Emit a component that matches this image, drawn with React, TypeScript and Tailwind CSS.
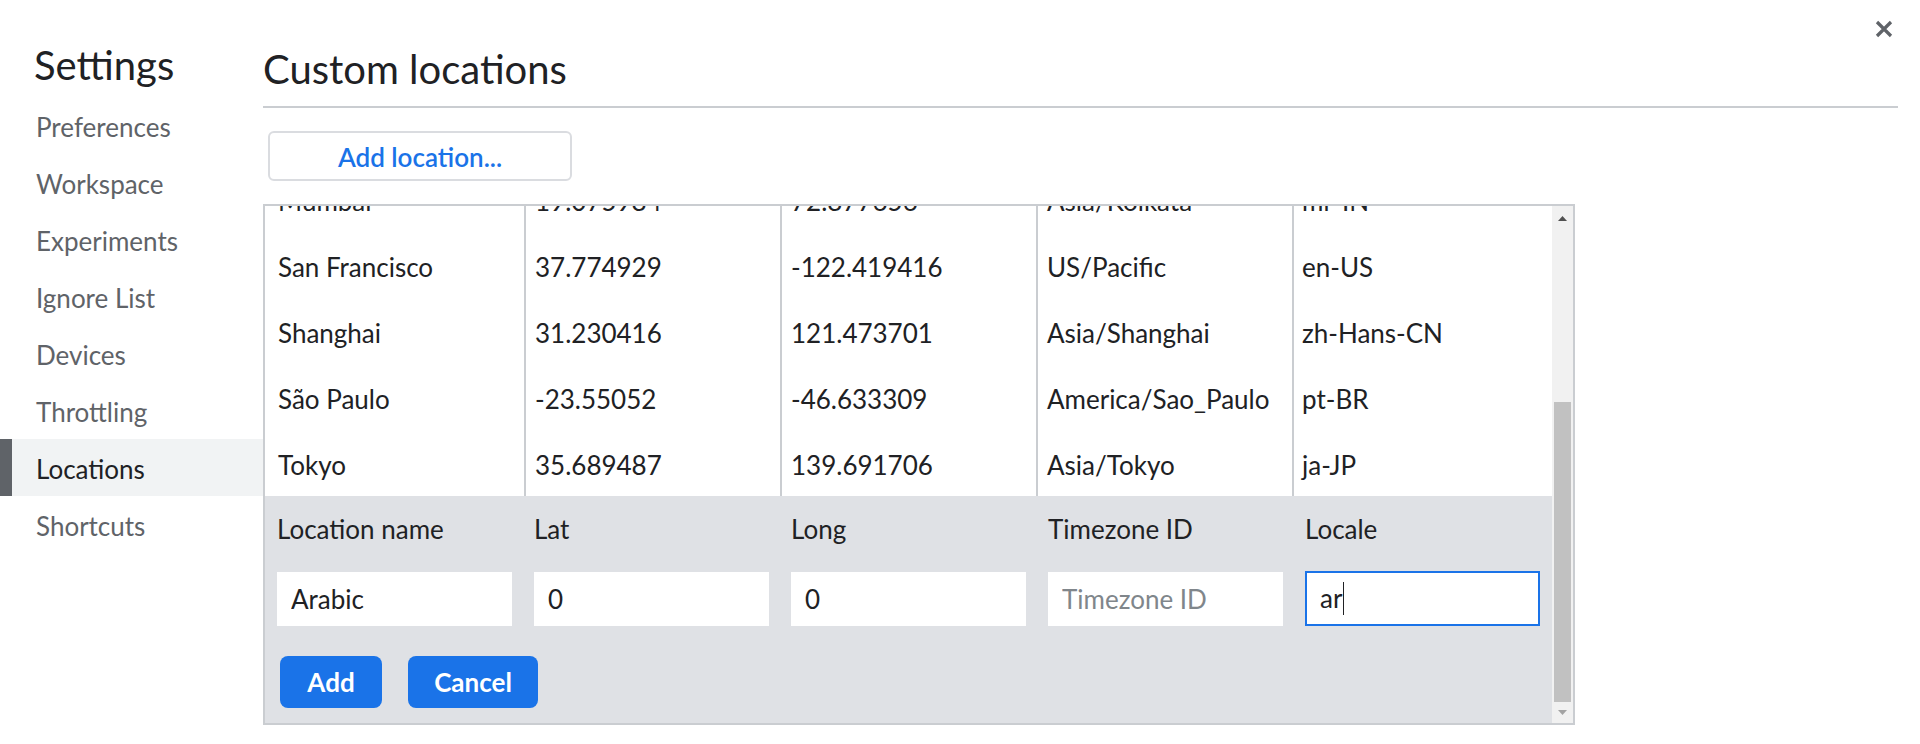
import type { ReactNode } from "react";

const NAV_ITEMS = [
  "Preferences",
  "Workspace",
  "Experiments",
  "Ignore List",
  "Devices",
  "Throttling",
  "Locations",
  "Shortcuts",
];

const LOCATIONS = [
  ["Mumbai", "19.075984", "72.877656", "Asia/Kolkata", "mr-IN"],
  ["San Francisco", "37.774929", "-122.419416", "US/Pacific", "en-US"],
  ["Shanghai", "31.230416", "121.473701", "Asia/Shanghai", "zh-Hans-CN"],
  ["São Paulo", "-23.55052", "-46.633309", "America/Sao_Paulo", "pt-BR"],
  ["Tokyo", "35.689487", "139.691706", "Asia/Tokyo", "ja-JP"],
];

function Cell({ index, children }: { index: number; children: ReactNode }) {
  if (index === 0) {
    return (
      <div className="flex w-[259px] shrink-0 items-center pl-[13px] pt-[5px]">
        {children}
      </div>
    );
  }
  if (index === 4) {
    return (
      <div className="flex flex-1 items-center border-l-2 border-[#cacdd1] pl-[8px] pt-[5px]">
        {children}
      </div>
    );
  }
  return (
    <div className="flex w-[256px] shrink-0 items-center border-l-2 border-[#cacdd1] pl-[9px] pt-[5px]">
      {children}
    </div>
  );
}

function FakeScrollbar() {
  return (
    <div className="flex w-[21px] shrink-0 flex-col bg-[#f1f1f1]">
      <div className="flex h-[20px] items-center justify-center pt-[4px]">
        <svg width="9" height="5" viewBox="0 0 9 5" aria-hidden="true">
          <polygon points="4.5,0 9,5 0,5" fill="#505050" />
        </svg>
      </div>
      <div className="h-[176px]" />
      <div className="mx-[2px] flex-1 bg-[#c1c1c1]" />
      <div className="flex h-[21px] items-center justify-center">
        <svg width="9" height="5" viewBox="0 0 9 5" aria-hidden="true">
          <polygon points="0,0 9,0 4.5,5" fill="#a3a3a3" />
        </svg>
      </div>
    </div>
  );
}

function EditPanel() {
  const labels = ["Location name", "Lat", "Long", "Timezone ID", "Locale"];

  return (
    <div className="flex-1 bg-[#dfe1e5] px-[12px] pt-[16px]">
      <div className="grid grid-cols-5 gap-x-[22px]">
        {labels.map((label) => (
          <div key={label} className="h-[34px] leading-[34px]">
            {label}
          </div>
        ))}
      </div>
      <div className="mt-[26px] grid grid-cols-5 gap-x-[22px]">
        <input
          readOnly
          value="Arabic"
          className="h-[54px] w-full bg-white px-[14px] text-[#202124] outline-none"
        />
        <input
          readOnly
          value="0"
          className="h-[54px] w-full bg-white px-[14px] text-[#202124] outline-none"
        />
        <input
          readOnly
          value="0"
          className="h-[54px] w-full bg-white px-[14px] text-[#202124] outline-none"
        />
        <input
          readOnly
          placeholder="Timezone ID"
          className="h-[54px] w-full bg-white px-[14px] text-[#202124] outline-none placeholder:text-[#80868b]"
        />
        <div className="-mt-[1px] flex h-[55px] w-full items-center border-2 border-[#1a73e8] bg-white px-[13px]">
          <span>ar</span>
          <span className="ml-[1px] h-[33px] w-[1px] bg-[#202124]" />
        </div>
      </div>
      <div className="mt-[30px] flex gap-[26px] pl-[3px]">
        <button
          type="button"
          className="h-[52px] w-[102px] rounded-[8px] bg-[#1a73e8] font-bold text-white"
        >
          Add
        </button>
        <button
          type="button"
          className="h-[52px] w-[130px] rounded-[8px] bg-[#1a73e8] font-bold text-white"
        >
          Cancel
        </button>
      </div>
    </div>
  );
}

export default function App() {
  return (
    <div className="relative flex h-[744px] w-full overflow-hidden bg-white font-['Lato','Noto_Sans',sans-serif] text-[26px] text-[#202124]">
      <aside className="w-[263px] shrink-0">
        <h1 className="pl-[34px] pt-[40px] text-[40px] leading-[50px]">
          Settings
        </h1>
        <nav className="mt-[7px] flex flex-col">
          {NAV_ITEMS.map((item) =>
            item === "Locations" ? (
              <div
                key={item}
                className="flex h-[57px] items-center border-l-[12px] border-[#5f6368] bg-[#f1f3f4] pl-[24px] pt-[3px] text-[#202124]"
              >
                {item}
              </div>
            ) : (
              <div
                key={item}
                className="flex h-[57px] items-center border-l-[12px] border-transparent pl-[24px] pt-[3px] text-[#5f6368]"
              >
                {item}
              </div>
            ),
          )}
        </nav>
      </aside>

      <main className="flex-1 pr-[22px]">
        <h2 className="pt-[44px] text-[40px] leading-[50px]">
          Custom locations
        </h2>
        <div className="mt-[12px] h-[2px] bg-[#cacdd1]" />
        <button
          type="button"
          className="ml-[5px] mt-[23px] h-[50px] w-[304px] rounded-[6px] border-2 border-[#dadce0] bg-white pt-[2px] font-semibold text-[#1a73e8]"
        >
          Add location...
        </button>

        <div className="mt-[23px] flex h-[521px] w-[1312px] border-2 border-[#cacdd1]">
          <div className="flex min-w-0 flex-1 flex-col">
            <div className="h-[290px] overflow-hidden">
              <div className="-mt-[40px] flex flex-col">
                {LOCATIONS.map((row) => (
                  <div key={row[0]} className="flex h-[66px]">
                    {row.map((value, i) => (
                      <Cell key={i} index={i}>
                        {value}
                      </Cell>
                    ))}
                  </div>
                ))}
              </div>
            </div>
            <EditPanel />
          </div>
          <FakeScrollbar />
        </div>
      </main>

      <button
        type="button"
        aria-label="Close"
        className="absolute right-[27px] top-[20px] h-[18px] w-[18px]"
      >
        <svg width="18" height="18" viewBox="0 0 18 18" aria-hidden="true">
          <path
            d="M2 2 L16 16 M16 2 L2 16"
            stroke="#5f6368"
            strokeWidth="3.2"
          />
        </svg>
      </button>
    </div>
  );
}
